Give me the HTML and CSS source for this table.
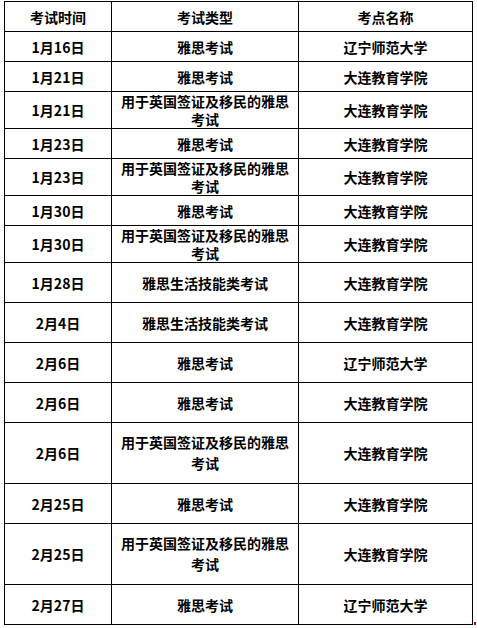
FILE: index.html
```html
<!DOCTYPE html>
<html lang="zh-CN">
<head>
<meta charset="utf-8">
<title>雅思考试安排</title>
<link rel="stylesheet" href="styles.css">
</head>
<body>
<div class="page">
<table class="exam">
  <colgroup>
    <col class="c-date">
    <col class="c-type">
    <col class="c-place">
  </colgroup>
  <tbody>
    <tr class="r30"><td>考试时间</td><td>考试类型</td><td>考点名称</td></tr>
    <tr class="r30"><td>1月16日</td><td>雅思考试</td><td>辽宁师范大学</td></tr>
    <tr class="r30"><td>1月21日</td><td>雅思考试</td><td>大连教育学院</td></tr>
    <tr class="r37"><td>1月21日</td><td>用于英国签证及移民的雅思考试</td><td>大连教育学院</td></tr>
    <tr class="r30"><td>1月23日</td><td>雅思考试</td><td>大连教育学院</td></tr>
    <tr class="r37"><td>1月23日</td><td>用于英国签证及移民的雅思考试</td><td>大连教育学院</td></tr>
    <tr class="r30"><td>1月30日</td><td>雅思考试</td><td>大连教育学院</td></tr>
    <tr class="r37"><td>1月30日</td><td>用于英国签证及移民的雅思考试</td><td>大连教育学院</td></tr>
    <tr class="r40"><td>1月28日</td><td>雅思生活技能类考试</td><td>大连教育学院</td></tr>
    <tr class="r40"><td>2月4日</td><td>雅思生活技能类考试</td><td>大连教育学院</td></tr>
    <tr class="r40"><td>2月6日</td><td>雅思考试</td><td>辽宁师范大学</td></tr>
    <tr class="r40"><td>2月6日</td><td>雅思考试</td><td>大连教育学院</td></tr>
    <tr class="r61"><td>2月6日</td><td>用于英国签证及移民的雅思考试</td><td>大连教育学院</td></tr>
    <tr class="r40"><td>2月25日</td><td>雅思考试</td><td>大连教育学院</td></tr>
    <tr class="r61"><td>2月25日</td><td>用于英国签证及移民的雅思考试</td><td>大连教育学院</td></tr>
    <tr class="r40"><td>2月27日</td><td>雅思考试</td><td>辽宁师范大学</td></tr>
  </tbody>
</table>
<span class="corner-mark"></span>
</div>
</body>
</html>
```

FILE: styles.css
```css
html, body {
  margin: 0;
  padding: 0;
  background: #ffffff;
}

.page {
  position: relative;
  padding: 1px 0 0 4px;
  width: 473px;
}

.exam {
  border-collapse: collapse;
  table-layout: fixed;
  width: 468px;
  font-family: "Noto Sans CJK SC", "Liberation Sans", sans-serif;
  font-weight: bold;
  font-size: 14px;
  color: #000000;
}

.c-date { width: 107px; }
.c-type { width: 187px; }
.c-place { width: 174px; }

.exam td {
  border: 1px solid #000000;
  text-align: center;
  vertical-align: middle;
  padding: 0 5px;
  line-height: 18px;
}

.r30 { height: 30px; }
.r37 { height: 37px; }
.r40 { height: 40px; }
.r61 { height: 61px; }

.r61 td { line-height: 21px; }

.corner-mark {
  position: absolute;
  left: 474px;
  top: 622px;
  width: 2px;
  height: 3px;
  background: #c00000;
}
```
